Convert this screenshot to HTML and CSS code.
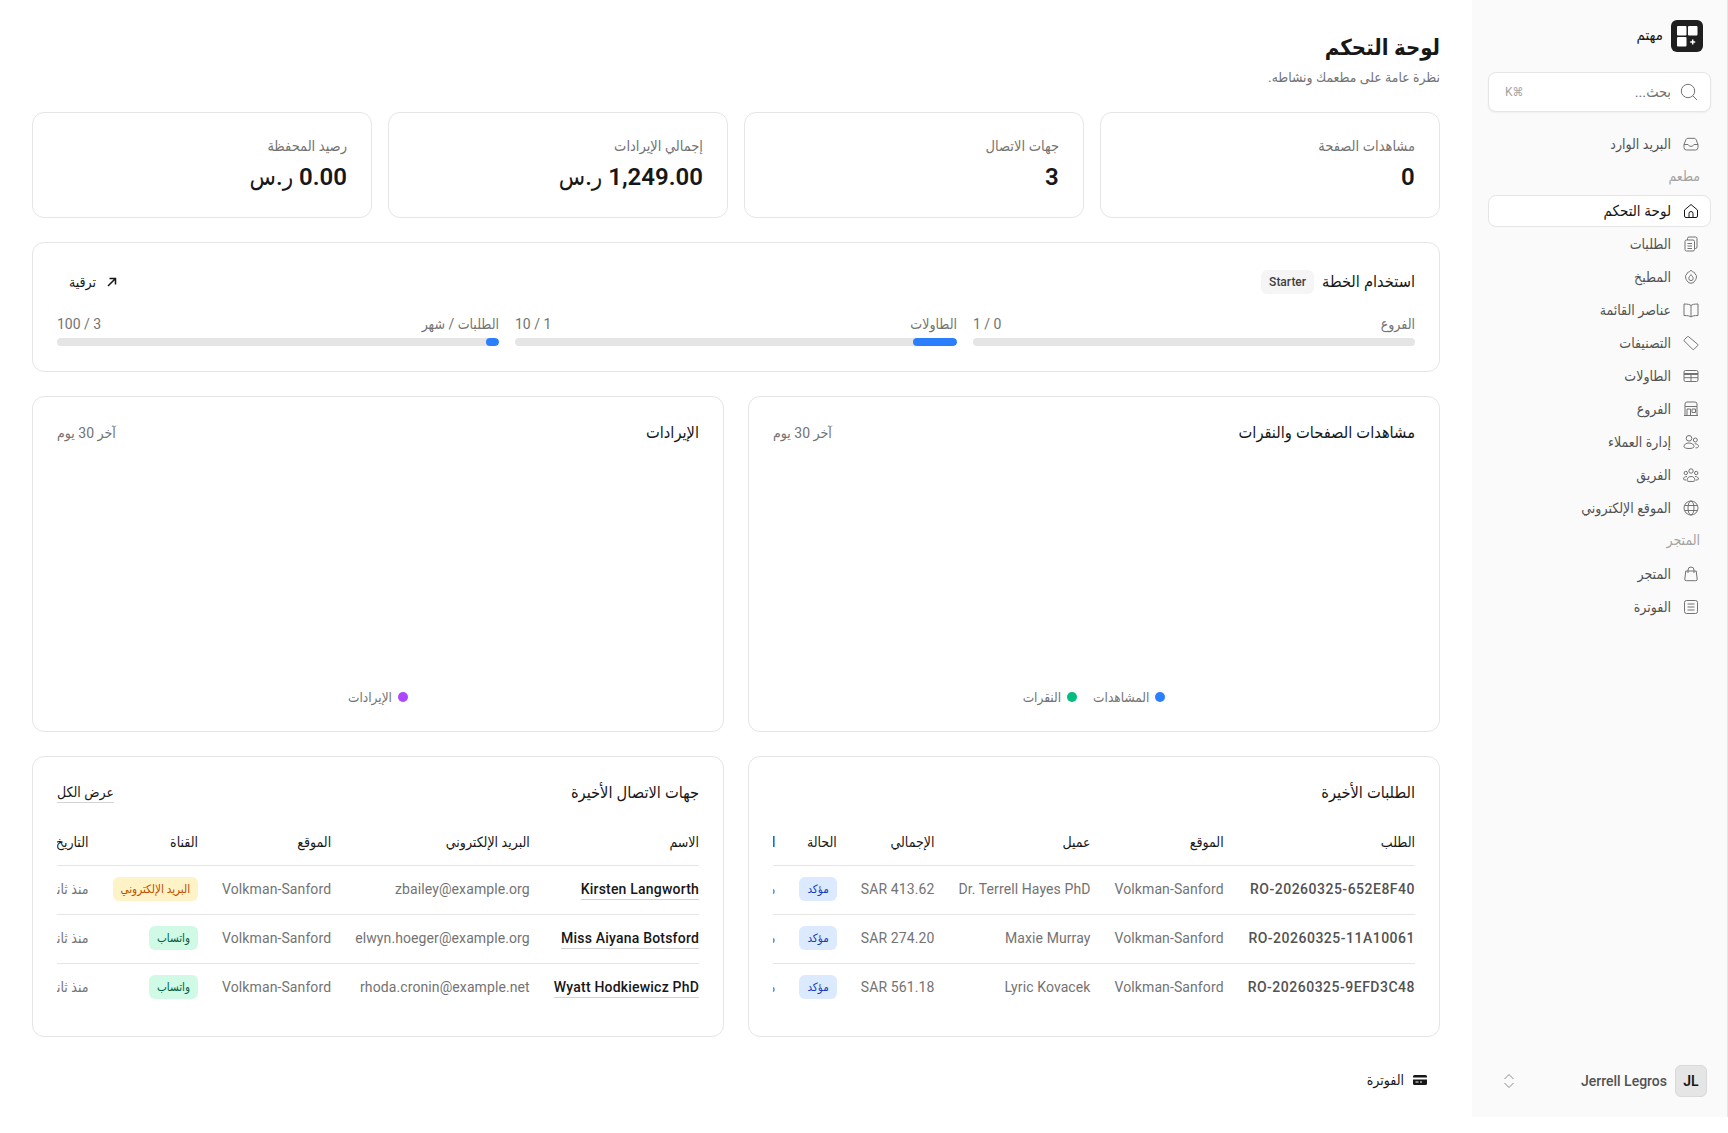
FILE: index.html
```html
<!DOCTYPE html>
<html lang="ar" dir="rtl">
<head>
  <meta charset="utf-8">
  <title>لوحة التحكم</title>
  <link rel="stylesheet" href="styles.css">
</head>
<body>
  <!-- Sidebar -->
  <aside class="sidebar">
    <div class="brand">
      <svg class="brand-logo" viewBox="0 0 32 32"><rect width="32" height="32" rx="6" fill="#1f1f1f"/><rect x="6" y="6" width="9.500" height="9.500" rx="1" fill="#fff"/><rect x="17" y="6" width="9.500" height="9.500" rx="1" fill="#fff"/><rect x="6" y="17" width="9.500" height="9.500" rx="1" fill="#fff"/><path d="M21.700 19.500v5M19.200 22h5" stroke="#fff" stroke-width="1.500"/></svg>
      <span>مهتم</span>
    </div>
    <div class="search">
      <svg class="icon" viewBox="0 0 20 20"><circle cx="9" cy="9" r="6.700"/><path d="M14 14l4 4"/></svg>
      <span class="search-label">بحث...</span>
      <span class="search-key">⌘K</span>
    </div>
    <nav class="nav">
      <a class="nav-item"><svg class="icon" viewBox="0 0 20 20"><path d="M3 10.500 5 5.500a2 2 0 0 1 1.800-1.200h6.400A2 2 0 0 1 15 5.500l2 5v3a2.500 2.500 0 0 1-2.500 2.500h-9A2.500 2.500 0 0 1 3 13.500z"/><path d="M3 10.500h4c.6 1.200 1.600 1.800 3 1.800s2.400-.6 3-1.800h4"/></svg>البريد الوارد</a>
      <div class="nav-label">مطعم</div>
      <a class="nav-item active"><svg class="icon" viewBox="0 0 20 20"><path d="M3.500 9 10 3.500 16.500 9v6a1.500 1.500 0 0 1-1.500 1.500H5A1.500 1.500 0 0 1 3.500 15z"/><path d="M8 16.500v-4a2 2 0 0 1 4 0v4"/></svg>لوحة التحكم</a>
      <a class="nav-item"><svg class="icon" viewBox="0 0 20 20"><rect x="4" y="6" width="9.500" height="11" rx="1.500"/><path d="M6.500 6V4.500A1.500 1.500 0 0 1 8 3h6.500A1.500 1.500 0 0 1 16 4.500V13a1.500 1.500 0 0 1-1.500 1.500h-1M6.500 9.500H11M6.500 12H11M6.500 14.500H11"/></svg>الطلبات</a>
      <a class="nav-item"><svg class="icon" viewBox="0 0 20 20"><path d="M10 3.200c.5 1.300 2 1.700 3.300 2.200.3 1.300 1.400 1.900 2.100 3.200.3 1.700-.3 3.500-1.100 4.700l-2.100 2.500c-1.400.5-3 .5-4.400 0L5.700 13.300C4.900 12.100 4.300 10.300 4.600 8.600c.7-1.300 1.800-1.900 2.100-3.200 1.300-.5 2.800-.9 3.300-2.200z"/><path d="M10 7.600c.3 1.100 2.200 1.900 2.200 3.800a2.200 2.200 0 0 1-4.400 0c0-1.900 1.900-2.700 2.200-3.800z"/></svg>المطبخ</a>
      <a class="nav-item"><svg class="icon" viewBox="0 0 20 20"><path d="M10 5.500C8.800 4.500 7 4 3 4v11.500c4 0 5.800.5 7 1.500 1.200-1 3-1.500 7-1.500V4c-4 0-5.800.5-7 1.500zM10 5.500V17"/></svg>عناصر القائمة</a>
      <a class="nav-item"><svg class="icon" viewBox="0 0 20 20"><path d="M3.300 6.700 6.300 3.700a1 1 0 0 1 1.300 0l9 7.500a1 1 0 0 1 0 1.500l-3.600 3.600a1 1 0 0 1-1.400 0L3.300 8a1 1 0 0 1 0-1.300z"/></svg>التصنيفات</a>
      <a class="nav-item"><svg class="icon" viewBox="0 0 20 20"><rect x="3" y="4.500" width="14" height="11" rx="1.500"/><path d="M3 7.500h14M3 8.500h14M3 11.700h14M10 8v7.500"/></svg>الطاولات</a>
      <a class="nav-item"><svg class="icon" viewBox="0 0 20 20"><path d="M4 16.500V5A2 2 0 0 1 6 3h8a2 2 0 0 1 2 2v11.500M3 16.500h14M4 7.500h12M6 16.500V10h3.500v6.500M11 10h3.500v3.500H11z"/></svg>الفروع</a>
      <a class="nav-item"><svg class="icon" viewBox="0 0 20 20"><circle cx="8" cy="6.300" r="2.800"/><circle cx="14.300" cy="8" r="2"/><path d="M3 14.700c0-2.300 2-3.700 5-3.700s5 1.400 5 3.700c0 1-2 1.800-5 1.800s-5-.8-5-1.800zM13.700 11.700c2 0 3.800 1 3.800 2.700 0 1-1 1.500-3 1.500"/></svg>إدارة العملاء</a>
      <a class="nav-item"><svg class="icon" viewBox="0 0 20 20"><circle cx="10" cy="6" r="2.200"/><circle cx="4.800" cy="8" r="1.700"/><circle cx="15.200" cy="8" r="1.700"/><path d="M6 15.500c0-2.500 1.500-4 4-4s4 1.500 4 4c0 .6-.9 1-4 1s-4-.4-4-1zM6 11.500c-2 0-3.500.9-3.500 2.500 0 .6.800 1 2.500 1M14 11.500c2 0 3.500.9 3.500 2.500 0 .6-.8 1-2.500 1"/></svg>الفريق</a>
      <a class="nav-item"><svg class="icon" viewBox="0 0 20 20"><circle cx="10" cy="10" r="7"/><ellipse cx="10" cy="10" rx="3" ry="7"/><path d="M3.500 7.500h13M3.500 12.500h13"/></svg>الموقع الإلكتروني</a>
      <div class="nav-label">المتجر</div>
      <a class="nav-item"><svg class="icon" viewBox="0 0 20 20"><path d="M4.800 7h10.400l1 8a1.500 1.500 0 0 1-1.500 1.700H5.300A1.500 1.500 0 0 1 3.800 15zM7 9V6a3 3 0 0 1 6 0v3"/></svg>المتجر</a>
      <a class="nav-item"><svg class="icon" viewBox="0 0 20 20"><rect x="3.500" y="3.500" width="13" height="13" rx="2"/><path d="M6.500 7h7M6.500 10h7M6.500 13h7"/></svg>الفوترة</a>
    </nav>
    <div class="user">
      <span class="avatar">JL</span>
      <span class="user-name">Jerrell Legros</span>
      <svg class="user-chevron" viewBox="0 0 20 20"><path d="M5.500 8 10 3.500 14.500 8M5.500 12 10 16.500 14.500 12"/></svg>
    </div>
  </aside>

  <!-- Main content -->
  <main class="main">
    <h1>لوحة التحكم</h1>
    <p class="subtitle">نظرة عامة على مطعمك ونشاطه.</p>

    <div class="stats">
      <div class="card stat"><div class="stat-label">مشاهدات الصفحة</div><div class="stat-value">0</div></div>
      <div class="card stat"><div class="stat-label">جهات الاتصال</div><div class="stat-value">3</div></div>
      <div class="card stat"><div class="stat-label">إجمالي الإيرادات</div><div class="stat-value">1,249.00 <span class="currency">ر.س</span></div></div>
      <div class="card stat"><div class="stat-label">رصيد المحفظة</div><div class="stat-value">0.00 <span class="currency">ر.س</span></div></div>
    </div>

    <div class="card plan">
      <div class="plan-head">
        <h2>استخدام الخطة</h2>
        <span class="plan-badge">Starter</span>
        <a class="upgrade"><svg viewBox="0 0 16 16"><path d="M4 12 11.500 4.500M5.500 4.500h6v6"/></svg>ترقية</a>
      </div>
      <div class="usage">
        <div class="usage-item">
          <div class="usage-row"><span>الفروع</span><span class="num">0 / 1</span></div>
          <div class="bar"></div>
        </div>
        <div class="usage-item">
          <div class="usage-row"><span>الطاولات</span><span class="num">1 / 10</span></div>
          <div class="bar"><div class="bar-fill" style="width: 10%"></div></div>
        </div>
        <div class="usage-item">
          <div class="usage-row"><span>الطلبات / شهر</span><span class="num">3 / 100</span></div>
          <div class="bar"><div class="bar-fill" style="width: 3%"></div></div>
        </div>
      </div>
    </div>

    <div class="two-col">
      <div class="card chart">
        <div class="chart-head"><h2>مشاهدات الصفحات والنقرات</h2><span class="muted">آخر 30 يوم</span></div>
        <div class="legend">
          <span class="legend-item"><i class="dot dot-blue"></i>المشاهدات</span>
          <span class="legend-item"><i class="dot dot-green"></i>النقرات</span>
        </div>
      </div>
      <div class="card chart">
        <div class="chart-head"><h2>الإيرادات</h2><span class="muted">آخر 30 يوم</span></div>
        <div class="legend">
          <span class="legend-item"><i class="dot dot-purple"></i>الإيرادات</span>
        </div>
      </div>
    </div>

    <div class="two-col">
      <div class="card list">
        <div class="list-head"><h2>الطلبات الأخيرة</h2></div>
        <div class="table-wrap">
          <table>
            <thead><tr><th>الطلب</th><th>الموقع</th><th>عميل</th><th>الإجمالي</th><th>الحالة</th><th>التاريخ</th></tr></thead>
            <tbody>
              <tr><td class="order-id">RO-20260325-652E8F40</td><td>Volkman-Sanford</td><td>Dr. Terrell Hayes PhD</td><td>SAR 413.62</td><td><span class="badge badge-blue">مؤكد</span></td><td>منذ ثانيتين</td></tr>
              <tr><td class="order-id">RO-20260325-11A10061</td><td>Volkman-Sanford</td><td>Maxie Murray</td><td>SAR 274.20</td><td><span class="badge badge-blue">مؤكد</span></td><td>منذ ثانيتين</td></tr>
              <tr><td class="order-id">RO-20260325-9EFD3C48</td><td>Volkman-Sanford</td><td>Lyric Kovacek</td><td>SAR 561.18</td><td><span class="badge badge-blue">مؤكد</span></td><td>منذ ثانيتين</td></tr>
            </tbody>
          </table>
        </div>
      </div>
      <div class="card list">
        <div class="list-head"><h2>جهات الاتصال الأخيرة</h2><a class="view-all">عرض الكل</a></div>
        <div class="table-wrap">
          <table>
            <thead><tr><th>الاسم</th><th>البريد الإلكتروني</th><th>الموقع</th><th>القناة</th><th>التاريخ</th></tr></thead>
            <tbody>
              <tr><td><a class="name-link">Kirsten Langworth</a></td><td>zbailey@example.org</td><td>Volkman-Sanford</td><td><span class="badge badge-amber">البريد الإلكتروني</span></td><td>منذ ثانيتين</td></tr>
              <tr><td><a class="name-link">Miss Aiyana Botsford</a></td><td>elwyn.hoeger@example.org</td><td>Volkman-Sanford</td><td><span class="badge badge-green">واتساب</span></td><td>منذ ثانيتين</td></tr>
              <tr><td><a class="name-link">Wyatt Hodkiewicz PhD</a></td><td>rhoda.cronin@example.net</td><td>Volkman-Sanford</td><td><span class="badge badge-green">واتساب</span></td><td>منذ ثانيتين</td></tr>
            </tbody>
          </table>
        </div>
      </div>
    </div>

    <a class="billing"><svg viewBox="0 0 16 16"><path d="M1 4.500A1.500 1.500 0 0 1 2.500 3h11A1.500 1.500 0 0 1 15 4.500V5.500H1zM1 7.500h14v4A1.500 1.500 0 0 1 13.500 13h-11A1.500 1.500 0 0 1 1 11.500zM3.500 9.500v1h3v-1zM8 9.500v1h2v-1z" fill-rule="evenodd"/></svg>الفوترة</a>
  </main>
</body>
</html>
```

FILE: styles.css
```css
* {
  box-sizing: border-box;
}

body {
  margin: 0;
  display: flex;
  align-items: flex-start;
  font-family: Roboto, "DejaVu Sans Condensed", "DejaVu Sans", sans-serif;
  font-size: 14px;
  color: #171717;
  background: #fff;
}

h1, h2, p {
  margin: 0;
}

/* Sidebar */
.sidebar {
  width: 256px;
  flex: none;
  height: 1117px;
  display: flex;
  flex-direction: column;
  padding: 20px 16px;
  background: #fafafa;
  border-right: 1px solid #e5e5e5;
}

.brand {
  display: flex;
  align-items: center;
  gap: 8px;
  padding: 0 8px;
  height: 32px;
  font-size: 15px;
  font-weight: 500;
}

.brand span {
  margin-top: -2px;
}

.brand-logo {
  width: 32px;
  height: 32px;
}

.icon {
  width: 20px;
  height: 20px;
  flex: none;
  fill: none;
  stroke: #737373;
  stroke-width: 1;
}

.search {
  display: flex;
  align-items: center;
  gap: 8px;
  height: 40px;
  margin-top: 20px;
  padding: 0 11px 0 16px;
  background: #fff;
  border: 1px solid #e5e5e5;
  border-radius: 8px;
  box-shadow: 0 1px 2px rgba(0, 0, 0, 0.05);
  color: #737373;
}

.search-label {
  flex: 1;
  font-size: 14.500px;
}

.search-key {
  font-size: 12px;
  color: #a3a3a3;
}

.nav {
  display: flex;
  flex-direction: column;
  gap: 1px;
  margin-top: 16px;
}

.nav-item {
  display: flex;
  align-items: center;
  gap: 10px;
  height: 32px;
  padding: 0 9px;
  border: 1px solid transparent;
  border-radius: 8px;
  color: #525252;
}

.nav-item.active {
  background: #fff;
  border-color: #e5e5e5;
  color: #171717;
  font-size: 15px;
  font-weight: 500;
}

.nav-item.active .icon {
  stroke: #171717;
}

.nav-label {
  padding: 0 11px;
  height: 32.500px;
  line-height: 31px;
  font-size: 14px;
  color: #a3a3a3;
}

.user {
  display: flex;
  align-items: center;
  gap: 8px;
  margin-top: auto;
  padding: 0 4px;
}

.avatar {
  width: 32px;
  height: 32px;
  display: flex;
  align-items: center;
  justify-content: center;
  background: #e5e5e5;
  border: 1px solid #d9d9d9;
  border-radius: 6px;
  font-size: 14px;
  font-weight: 600;
}

.user-name {
  flex: 1;
  font-weight: 500;
  color: #525252;
}

.user-chevron {
  width: 20px;
  height: 20px;
  margin-left: 7px;
  fill: none;
  stroke: #8a8a8a;
  stroke-width: 1;
}

/* Main */
.main {
  flex: 1;
  min-width: 0;
  padding: 32px 32px 0;
}

h1 {
  font-size: 22px;
  line-height: 32px;
  font-weight: 600;
}

.subtitle {
  margin-top: 3px;
  font-size: 13.800px;
  line-height: 20px;
  color: #737373;
}

.card {
  background: #fff;
  border: 1px solid #e5e5e5;
  border-radius: 12px;
}

.stats {
  display: grid;
  grid-template-columns: repeat(4, minmax(0, 1fr));
  gap: 16px;
  margin-top: 25px;
}

.stat {
  height: 106px;
  padding: 24px;
}

.stat-label {
  font-size: 14.500px;
  line-height: 20px;
  color: #737373;
}

.stat-value {
  margin-top: 4px;
  font-size: 24px;
  line-height: 32px;
  font-weight: 600;
  letter-spacing: 0.4px;
}

.currency {
  font-weight: 500;
}

/* Plan usage */
.plan {
  height: 130px;
  margin-top: 24px;
  padding: 23px 24px;
}

h2 {
  font-size: 16.300px;
  line-height: 24px;
  font-weight: 500;
}

.plan-head {
  display: flex;
  align-items: center;
  gap: 8px;
  height: 32px;
}

.plan-badge {
  padding: 2px 8px;
  height: 24px;
  line-height: 20px;
  background: #f5f5f5;
  border-radius: 6px;
  font-size: 12px;
  font-weight: 500;
  color: #404040;
}

.upgrade {
  display: flex;
  align-items: center;
  gap: 8px;
  margin-right: auto;
  padding: 0 12px;
  font-weight: 500;
}

.upgrade svg {
  width: 16px;
  height: 16px;
  fill: none;
  stroke: #171717;
  stroke-width: 1.500;
}

.usage {
  display: grid;
  grid-template-columns: repeat(3, minmax(0, 1fr));
  gap: 16px;
  margin-top: 16px;
}

.usage-row {
  display: flex;
  justify-content: space-between;
  line-height: 20px;
  color: #737373;
}

.bar {
  height: 8px;
  margin-top: 4px;
  background: #e5e5e5;
  border-radius: 4px;
  overflow: hidden;
}

.bar-fill {
  height: 100%;
  background: #2b7fff;
  border-radius: 4px;
}

/* Charts */
.two-col {
  display: grid;
  grid-template-columns: repeat(2, minmax(0, 1fr));
  gap: 24px;
  margin-top: 24px;
}

.chart {
  height: 336px;
  padding: 24px;
  display: flex;
  flex-direction: column;
}

.chart-head {
  display: flex;
  align-items: center;
  justify-content: space-between;
}

.muted {
  font-size: 14px;
  color: #737373;
}

.legend {
  display: flex;
  justify-content: center;
  gap: 16px;
  margin-top: auto;
  margin-bottom: 2px;
  font-size: 13.500px;
  color: #737373;
}

.legend-item {
  display: flex;
  align-items: center;
  gap: 6px;
}

.dot {
  width: 10px;
  height: 10px;
  border-radius: 50%;
}

.dot-blue {
  background: #2b7fff;
}

.dot-green {
  background: #00bc7d;
}

.dot-purple {
  background: #ad46ff;
}

/* Recent lists */
.list {
  height: 281px;
  padding: 24px;
}

.list-head {
  display: flex;
  align-items: center;
  justify-content: space-between;
  height: 24px;
}

.view-all {
  padding-bottom: 2px;
  border-bottom: 1px solid #d4d4d4;
}

.table-wrap {
  margin-top: 16px;
  overflow: hidden;
}

table {
  border-collapse: collapse;
  white-space: nowrap;
}

th, td {
  padding: 0 12px 1px;
  text-align: right;
}

th:first-child, td:first-child {
  padding-right: 0;
}

th {
  height: 44px;
  font-weight: 500;
}

td {
  height: 49px;
  border-top: 1px solid #e5e5e5;
  color: #737373;
  letter-spacing: 0.1px;
}

.order-id {
  font-weight: 500;
  color: #525252;
  letter-spacing: 0.5px;
}

.name-link {
  padding-bottom: 2px;
  border-bottom: 1px solid #d4d4d4;
  color: #171717;
  font-weight: 500;
  letter-spacing: 0.2px;
}

.badge {
  display: inline-block;
  height: 24px;
  line-height: 24px;
  padding: 0 8px;
  border-radius: 6px;
  font-size: 11.600px;
  letter-spacing: 0;
}

.badge-blue {
  background: #dbeafe;
  color: #193cb8;
}

.badge-amber {
  background: #fef3c6;
  color: #bb4d00;
}

.badge-green {
  background: #d0fae5;
  color: #006045;
}

/* Footer link */
.billing {
  display: flex;
  align-items: center;
  gap: 8px;
  margin-top: 35px;
  padding: 0 12px;
  font-weight: 500;
}

.billing svg {
  width: 16px;
  height: 16px;
  fill: #171717;
}
```
